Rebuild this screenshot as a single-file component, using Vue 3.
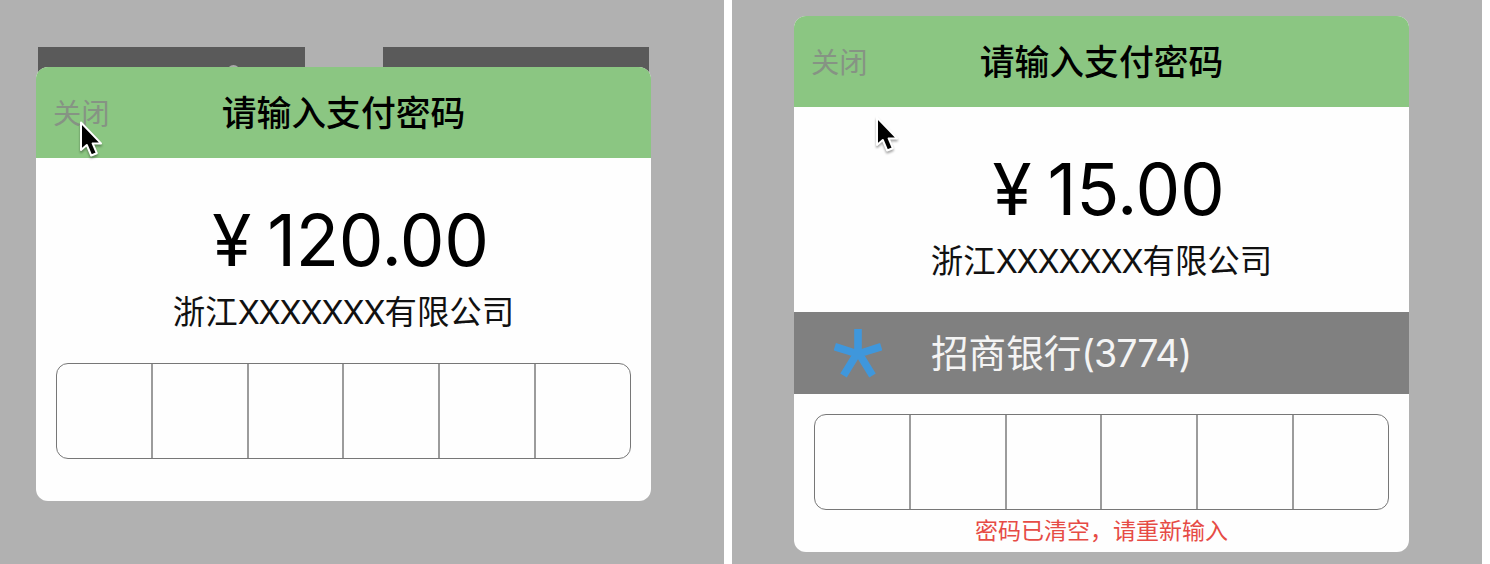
<script setup>
import { ref } from 'vue'

// the two pay dialogs, with and without a bound bank card
const dialogs = ref([
  { id: 'plain', amount: '120.00', bank: '', error: '' },
  { id: 'bank', amount: '15.00', bank: '招商银行', tail: '(3774)', error: '密码已清空，请重新输入' }
])
const company = { city: '浙江', mask: 'XXXXXXX', kind: '有限公司' }
</script>

<template>
  <div class="page">
    <div v-for="item in dialogs" :key="item.id" class="screen" :class="item.id">
      <div v-if="item.id === 'plain'" class="tiles">
        <div class="tile"><span class="dot"></span></div>
        <div class="tile"></div>
      </div>
      <div class="dialog">
        <div class="header">
          <span class="close">关闭</span>
          <span class="title">请输入支付密码</span>
        </div>
        <div class="info">
          <div class="amount"><span class="yen">¥</span><span class="num">{{ item.amount }}</span></div>
          <div class="company">{{ company.city }}<span class="mask">{{ company.mask }}</span>{{ company.kind }}</div>
        </div>
        <div v-if="item.bank" class="bankcard">
          <svg class="star" width="48" height="50" viewBox="0 0 48 50">
            <g stroke="#3f97dc" stroke-width="7.6" fill="none">
              <path d="M24 27V1M24 26L0.8 18.7M24 26L47.2 18.7M24 24L9.5 47.5M24 24L38.5 47.5" />
            </g>
          </svg>
          <span class="bankname">{{ item.bank }}<span class="tail">{{ item.tail }}</span></span>
        </div>
        <div class="cells">
          <div v-for="n in 6" :key="n" class="cell"></div>
        </div>
        <div v-if="item.error" class="error">{{ item.error }}</div>
      </div>
      <svg class="cursor" width="32" height="44" viewBox="0 0 32 44">
        <path d="M5 3.5V31L10.8 26L15.2 36.5L20.8 34.2L16.6 24.4H25Z" fill="#000" stroke="#fff" stroke-width="2" stroke-linejoin="round" />
      </svg>
    </div>
  </div>
</template>

<style>
body {
  margin: 0;
  background: #fff;
}
</style>

<style scoped>
.page {
  display: flex;
  gap: 8px;
  width: 1490px;
  height: 564px;
  overflow: hidden;
  font-family: Inter, "Noto Sans CJK SC", sans-serif;
  color: #000;
}
.screen {
  position: relative;
  box-sizing: border-box;
  height: 564px;
  background: #b1b1b1;
}
.plain {
  width: 724px;
  padding: 47px 0 0 36px;
}
.bank {
  width: 750px;
  padding: 16px 0 0 62px;
}
.tiles {
  display: flex;
  gap: 78px;
  margin-left: 2px;
}
.tile {
  width: 266.5px;
  height: 40px;
  background: #5a5a5a;
}
.dot {
  display: block;
  width: 13px;
  height: 13px;
  margin: 18px 0 0 189px;
  border-radius: 50%;
  background: #aaa;
}
.dialog {
  position: relative;
  width: 615px;
  height: 536px;
  border-radius: 12px;
  background: #fefefe;
  overflow: hidden;
}
.plain .dialog {
  height: 434px;
  margin-top: -20px;
}
.header {
  display: grid;
  grid-template-columns: 155px 1fr 155px;
  align-items: center;
  box-sizing: border-box;
  height: 91px;
  padding-bottom: 4px;
  background: #8bc682;
}
.close {
  padding: 2px 0 0 17px;
  font-size: 28.3px;
  font-weight: 400;
  color: #869384;
}
.title {
  text-align: center;
  font-size: 34.8px;
  font-weight: 500;
  white-space: nowrap;
}
.info {
  box-sizing: border-box;
  height: 205px;
  padding-top: 42px;
}
.amount {
  display: flex;
  justify-content: center;
  height: 82px;
  padding-left: 14px;
  line-height: 80px;
  font-size: 71px;
}
.yen {
  margin-right: 16px;
}
.num {
  letter-spacing: -0.3px;
}
.company {
  height: 62px;
  line-height: 62px;
  text-align: center;
  font-size: 32.4px;
  white-space: nowrap;
  color: #111;
}
.mask {
  letter-spacing: -1.1px;
}
.bankcard {
  display: flex;
  align-items: center;
  height: 81.5px;
  background: #808080;
}
.star {
  margin-left: 40px;
}
.bankname {
  margin-left: 49px;
  padding-bottom: 4px;
  font-size: 37.6px;
  color: #f4f4f4;
  white-space: nowrap;
}
.tail {
  letter-spacing: -1px;
}
.cells {
  display: flex;
  box-sizing: border-box;
  width: 575px;
  height: 96px;
  margin-left: 20px;
  border: 1px solid #777;
  border-radius: 12px;
}
.bank .cells {
  margin-top: 20.5px;
}
.cell {
  flex: 1;
}
.cell + .cell {
  border-left: 2px solid #9c9c9c;
}
.error {
  height: 40px;
  line-height: 42px;
  text-align: center;
  font-size: 23px;
  color: #e64b45;
}
.cursor {
  position: absolute;
  left: 76px;
  top: 119px;
  filter: drop-shadow(0 2px 1px rgba(0, 0, 0, 0.35));
}
.bank .cursor {
  left: 140px;
  top: 114px;
}
</style>
